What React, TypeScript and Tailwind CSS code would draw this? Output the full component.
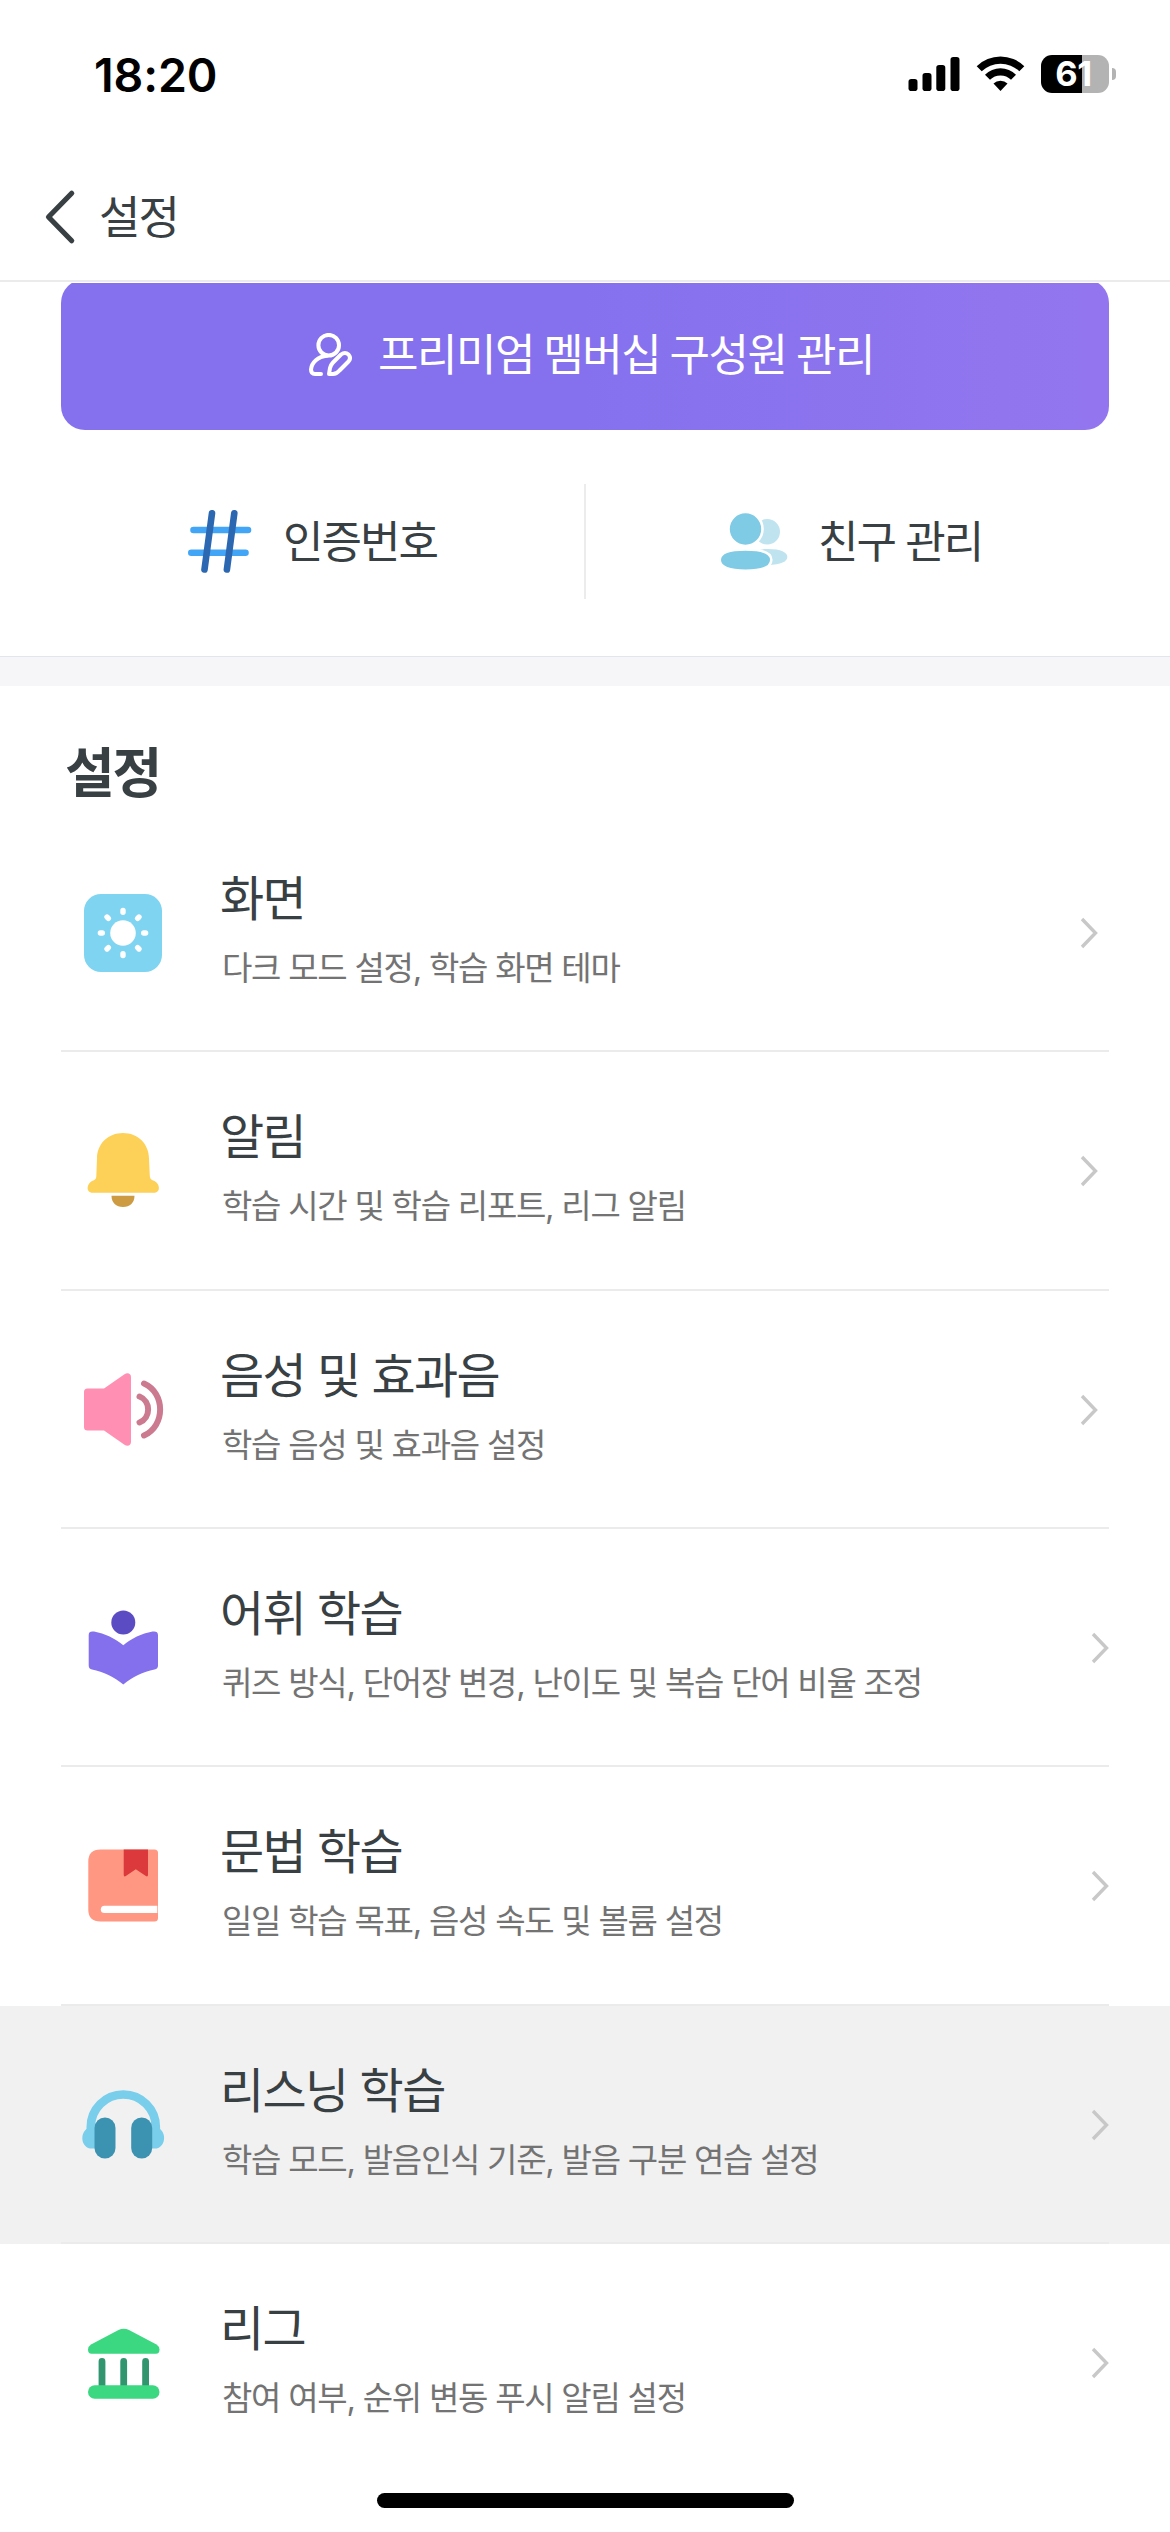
import React from "react";

type Row = { title: string; desc: string; icon: React.ReactNode; far?: boolean; active?: boolean };

const Sun = () => (
  <svg width="96" height="96" viewBox="0 0 96 96">
    <rect x="9" y="9" width="78" height="78" rx="17" fill="#7fd4f1" />
    <circle cx="48" cy="48" r="12.8" fill="#fff" />
    <g stroke="#fff" strokeWidth="5.4" strokeLinecap="round">
      {[0, 45, 90, 135, 180, 225, 270, 315].map((a) => (
        <path key={a} d="M48 25.4v1.9" transform={`rotate(${a} 48 48)`} />
      ))}
    </g>
  </svg>
);

const Bell = () => (
  <svg width="96" height="96" viewBox="0 0 96 96">
    <path d="M48 10C33 10 22 21 22 35.500L21.300 53C21.300 56 20 57 17 58C12 60.500 10.500 68.500 16.500 69.800H80C86 68.500 84.500 60.500 79.500 58C76.500 57 75 56 74.800 53L74 35.500C74 21 63 10 48 10Z" fill="#fdd158" />
    <path d="M36.500 72.700H59.500C59.500 79.500 55 84 48 84S36.500 79.500 36.500 72.700Z" fill="#cc9b42" />
  </svg>
);

const Speaker = () => (
  <svg width="96" height="96" viewBox="0 0 96 96">
    <path d="M12.500 26.500H29L49.500 12.300C52.500 10.300 56 11.500 56 15V80C56 83.500 52.500 84.700 49.500 82.700L29 68.500H12.500Q9 68.500 9 65V30Q9 26.500 12.500 26.500Z" fill="#ff90b3" />
    <path d="M64.500 34.500C76 39 76 56 64.500 60.500M69 21.500C90.500 31 90.500 64 69 73.500" fill="none" stroke="#cc7a90" strokeWidth="6" strokeLinecap="round" />
  </svg>
);

const Reader = () => (
  <svg width="96" height="96" viewBox="0 0 96 96">
    <circle cx="48.300" cy="22.500" r="12" fill="#5c4cc4" />
    <path d="M13.700 35C13.700 32 15.500 31 19 31.500C30 33.500 40 38.500 48.300 45.300C56.500 38.500 66.500 33.500 77.500 31.500C81 31 83 32 83 35V65.500Q83 69 79.500 69.500C68 71.500 57.500 77 48.300 84.500C39 77 28.500 71.500 17 69.500Q13.700 69 13.700 65.500Z" fill="#846fed" />
  </svg>
);

const Book = () => (
  <svg width="96" height="96" viewBox="0 0 96 96">
    <path d="M25.500 11.500H79.500Q83 11.500 83 15V80Q83 83.500 79.500 83.500H25.500Q13.300 83.500 13.300 71.500V23.500Q13.300 11.500 25.500 11.500Z" fill="#ff9782" />
    <path d="M48.700 11.500H73V36.500Q73 39.500 70.500 37.800L60.800 31.200L51.200 37.800Q48.700 39.500 48.700 36.500Z" fill="#db393c" />
    <path d="M82.300 67.800H29.500Q25.800 68 25.800 71.500T29.500 75H82.300Z" fill="#fff" />
  </svg>
);

const Headphones = () => (
  <svg width="96" height="96" viewBox="0 0 96 96">
    <path d="M15.800 54V50A32.500 32.500 0 0 1 80.800 50V54" fill="none" stroke="#78ceeb" strokeWidth="8.600" />
    <path d="M25 51H14C5.500 53 4.500 69 15 71.500H25ZM71.600 51H82.600C91 53 92 69 81.600 71.500H71.600Z" fill="#78ceeb" />
    <rect x="19.500" y="40.500" width="21" height="41" rx="10.500" fill="#3c93b1" />
    <rect x="56.200" y="40.500" width="21" height="41" rx="10.500" fill="#3c93b1" />
  </svg>
);

const Bank = () => (
  <svg width="96" height="96" viewBox="0 0 96 96">
    <path d="M27 46.500V76M48.700 46.500V76M70.600 46.500V76" stroke="#31956f" strokeWidth="6.800" strokeLinecap="round" />
    <path d="M43.500 15Q48.700 12.500 54 15L81.500 29.500Q84.500 31.500 84.500 34.500Q84.500 38.800 81 38.800H16.500Q13 38.800 13 34.500Q13 31.500 16 29.500Z" fill="#3bd881" />
    <rect x="13" y="70.200" width="71.500" height="13.500" rx="6.700" fill="#3bd881" />
  </svg>
);

const rows: Row[] = [
  { title: "화면", desc: "다크 모드 설정, 학습 화면 테마", icon: <Sun /> },
  { title: "알림", desc: "학습 시간 및 학습 리포트, 리그 알림", icon: <Bell /> },
  { title: "음성 및 효과음", desc: "학습 음성 및 효과음 설정", icon: <Speaker /> },
  { title: "어휘 학습", desc: "퀴즈 방식, 단어장 변경, 난이도 및 복습 단어 비율 조정", icon: <Reader />, far: true },
  { title: "문법 학습", desc: "일일 학습 목표, 음성 속도 및 볼륨 설정", icon: <Book />, far: true },
  { title: "리스닝 학습", desc: "학습 모드, 발음인식 기준, 발음 구분 연습 설정", icon: <Headphones />, far: true, active: true },
  { title: "리그", desc: "참여 여부, 순위 변동 푸시 알림 설정", icon: <Bank />, far: true },
];

function StatusBar() {
  return (
    <div className="flex h-[155px] shrink-0 items-start justify-between pl-[94px] pr-[54px] pt-[54px]">
      <span className="mt-[-3px] text-[46.5px] font-semibold leading-[48px] tracking-[-0.1px] text-black">18:20</span>
      <div className="flex items-start text-black">
        <svg width="52" height="40" viewBox="0 0 52 40" className="mr-[16px]">
          <rect x="0.500" y="25" width="9" height="12" rx="2.800" />
          <rect x="14.500" y="19" width="9" height="18" rx="2.800" />
          <rect x="28.300" y="11" width="9" height="26" rx="2.800" />
          <rect x="42.500" y="3" width="9" height="34" rx="2.800" />
        </svg>
        <svg width="49" height="40" viewBox="0 0 49 40" className="mr-[16px]">
          <path d="M0.700 12.200A34 34 0 0 1 48.300 12.200L43.300 17.300A27 27 0 0 0 5.700 17.300Z" />
          <path d="M9 20.700A22 22 0 0 1 40 20.700L35 25.800A15 15 0 0 0 14 25.800Z" />
          <path d="M17.500 29.500A10 10 0 0 1 31.500 29.500L24.500 37Z" />
        </svg>
        <div className="mt-px flex items-center">
          <div className="flex h-[38px] w-[68px] items-center justify-center rounded-[11px] bg-[linear-gradient(90deg,#000_60%,#b3b3b3_60%)]">
            <span className="pr-[3px] text-[34.5px] font-bold leading-[38px] tracking-[-0.5px] text-white">61</span>
          </div>
          <div className="ml-[3px] h-[12px] w-[4px] rounded-r-full bg-[#b3b3b3]" />
        </div>
      </div>
    </div>
  );
}

function Header() {
  return (
    <div className="mb-px flex h-[127px] shrink-0 items-center border-b-2 border-[#ebebeb] pl-[44px]">
      <svg width="32" height="56" viewBox="0 0 32 56" fill="none" stroke="#384043" strokeWidth="5.200" strokeLinecap="round" strokeLinejoin="round" className="mb-[2px]">
        <path d="M27.700 4.300L4.500 28L27.700 51.700" />
      </svg>
      <span className="ml-[23px] text-[45px] leading-[60px] tracking-[-0.04em]">설정</span>
    </div>
  );
}

function PremiumButton() {
  return (
    <div className="mx-[61px] flex h-[151px] items-center rounded-[24px] bg-[linear-gradient(90deg,#8571ee_0%,#8571ee_50%,#9376ef_100%)] pl-[248px] text-white">
      <svg width="43" height="43" viewBox="0 0 43 43" fill="none" stroke="#fff" strokeWidth="4" strokeLinecap="round" strokeLinejoin="round">
        <circle cx="19.700" cy="12.200" r="10.300" />
        <path d="M18 22.800C9 23.500 2.600 29.500 2 36.500Q2 41 6 41H12" />
        <path d="M20 41L21 35Q22 31.500 24 29.500L32 21.500Q36 18.500 39.500 21.500Q42.500 25 39.500 28.500L30.500 37.500Q27.500 41 24 41Z" />
      </svg>
      <span className="ml-[26px] text-[44px] leading-[60px] tracking-[-1.5px] [word-spacing:-1.5px]">프리미엄 멤버십 구성원 관리</span>
    </div>
  );
}

function Shortcuts() {
  return (
    <div className="flex h-[226px] items-center pb-[3px] text-[44px] leading-[60px] tracking-[-2px]">
      <div className="flex w-[584px] items-center pl-[188px]">
        <svg width="64" height="64" viewBox="0 0 64 64" fill="none" strokeWidth="6.600" strokeLinecap="round" className="mb-[2px]">
          <path d="M5.500 21H60M3.300 43.700H57.500" stroke="#43a5f5" />
          <path d="M24 4.300L16.500 60.500M46.300 4.300L38.900 60.500" stroke="#2c67b1" />
        </svg>
        <span className="ml-[31px]">인증번호</span>
      </div>
      <div className="h-[115px] w-[2px] bg-[#ececec]" />
      <div className="flex items-center pl-[135px]">
        <svg width="67" height="60" viewBox="0 0 67 60">
          <circle cx="46.200" cy="19.800" r="12.800" fill="#bfe4f0" />
          <path d="M47 37C60 37 66.300 40.500 66.300 45S60 52.800 47 52.800S28 49 28 45S34 37 47 37Z" fill="#bfe4f0" />
          <circle cx="24.500" cy="17" r="17" fill="#7fcae4" stroke="#fff" strokeWidth="2.600" />
          <path d="M24.500 37.500C40 37.500 50.300 40.500 50.300 48S40 58.700 24.500 58.700S-1.300 55.500 -1.300 48S9 37.500 24.500 37.500Z" fill="#7fcae4" stroke="#fff" strokeWidth="2.600" />
        </svg>
        <span className="ml-[30px]">친구 관리</span>
      </div>
    </div>
  );
}

function SettingRow({ row, last }: { row: Row; last: boolean }) {
  return (
    <div className={row.active ? "bg-[#f1f1f2]" : "bg-white"}>
      <div
        className={`mx-[61px] flex h-[calc(715px/3)] items-center border-b-2 pl-[14px] pt-[2px] ${last ? "border-transparent" : "border-[#ebebeb]"} ${row.far ? "pr-0" : "pr-[11px]"}`}
      >
        {row.icon}
        <div className="ml-[49px] flex flex-1 flex-col gap-[13px] pb-[7px]">
          <p className="text-[48px] leading-[64px] tracking-[-1.6px]">{row.title}</p>
          <p className="ml-[2px] text-[33px] leading-[48px] tracking-[-1.26px] text-[#737373]">{row.desc}</p>
        </div>
        <svg width="18" height="32" viewBox="0 0 18 32" fill="none" stroke="#c8c8c8" strokeWidth="3.400">
          <path d="M2 2L15.500 16L2 30" />
        </svg>
      </div>
    </div>
  );
}

export default function App() {
  return (
    <div className="relative flex h-[2532px] w-[1170px] flex-col overflow-hidden bg-white font-['Inter','Noto_Sans_CJK_KR',sans-serif] text-[#384043]">
      <StatusBar />
      <Header />
      <div className="flex-1 overflow-hidden whitespace-nowrap">
        <div className="mt-[-4px]">
          <PremiumButton />
          <Shortcuts />
          <div className="h-[30px] border-t border-[#e4e4ee] bg-[#f6f6f9]" />
          <h2 className="h-[128px] pl-[65px] pt-[56px] text-[54px] font-bold leading-[64px] tracking-[-0.04em]">설정</h2>
          {rows.map((row, i) => (
            <SettingRow key={row.title} row={row} last={i === rows.length - 1} />
          ))}
        </div>
      </div>
      <div className="absolute bottom-[24px] left-[377px] h-[15px] w-[417px] rounded-full bg-black" />
    </div>
  );
}
